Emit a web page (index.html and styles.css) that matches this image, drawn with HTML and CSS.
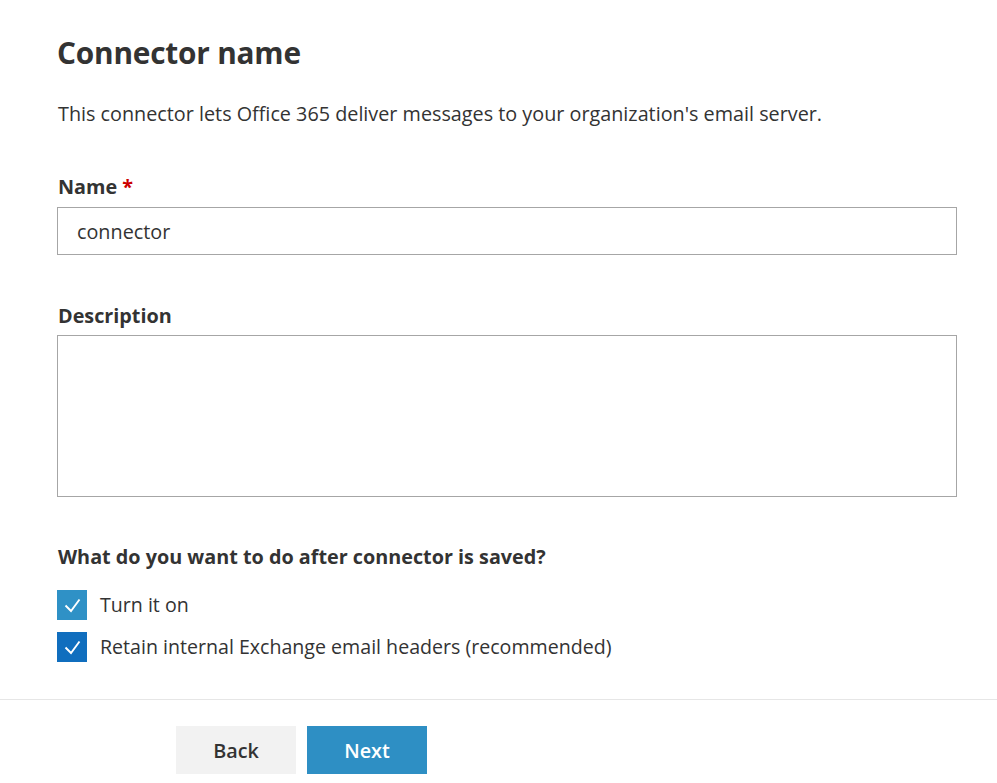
FILE: index.html
```html
<!DOCTYPE html>
<html lang="en">
<head>
<meta charset="utf-8">
<title>Connector name</title>
<link rel="stylesheet" href="styles.css">
</head>
<body>
<main class="page">
  <section class="content">
    <h1 class="title">Connector name</h1>
    <p class="intro">This connector lets Office 365 deliver messages to your organization's email server.</p>

    <div class="field field-name">
      <label class="label" for="name">Name <span class="req">*</span></label>
      <input class="input" id="name" type="text" value="connector">
    </div>

    <div class="field field-desc">
      <label class="label" for="desc">Description</label>
      <textarea class="textarea" id="desc"></textarea>
    </div>

    <div class="field field-after">
      <div class="label">What do you want to do after connector is saved?</div>
      <div class="checks">
        <label class="check">
          <span class="box box-light"><svg viewBox="0 0 30 30" width="30" height="30"><path d="M8.5 15.5 L14 21 L22.5 9.5" fill="none" stroke="#fff" stroke-width="1.9"/></svg></span>
          <span class="check-text">Turn it on</span>
        </label>
        <label class="check">
          <span class="box box-dark"><svg viewBox="0 0 30 30" width="30" height="30"><path d="M8.5 15.5 L14 21 L22.5 9.5" fill="none" stroke="#fff" stroke-width="1.9"/></svg></span>
          <span class="check-text">Retain internal Exchange email headers (recommended)</span>
        </label>
      </div>
    </div>
  </section>

  <footer class="footer">
    <button class="btn btn-back" type="button">Back</button>
    <button class="btn btn-next" type="button">Next</button>
  </footer>
</main>
</body>
</html>
```

FILE: styles.css
```css
* { box-sizing: border-box; }
html, body { margin: 0; padding: 0; background: #fff; }
body {
  font-family: "Open Sans", "Noto Sans", "Liberation Sans", sans-serif;
  color: #333;
  width: 997px;
  height: 783px;
  overflow: hidden;
}
.page { display: flex; flex-direction: column; }
.content { padding: 33px 40px 0 57px; }
.title {
  margin: 0;
  font-size: 29.8px;
  font-weight: 700;
  line-height: 40px;
  color: #333;
  letter-spacing: -0.2px;
}
.intro {
  margin: 27px 0 0 1px;
  font-size: 19.8px;
  line-height: 28px;
  color: #333;
}
.field { display: flex; flex-direction: column; }
.field-name { margin-top: 45px; }
.field-desc { margin-top: 47px; }
.field-after { margin-top: 46px; }
.label {
  font-size: 19.8px;
  font-weight: 700;
  line-height: 28px;
  color: #333;
  padding-left: 1px;
}
.req { color: #c00; }
.input {
  margin-top: 6px;
  width: 900px;
  height: 48px;
  border: 1px solid #a6a6a6;
  padding: 0 19px;
  font: inherit;
  font-size: 19.8px;
  color: #333;
  outline: none;
}
.textarea {
  margin-top: 5px;
  width: 900px;
  height: 162px;
  border: 1px solid #a6a6a6;
  resize: none;
  font: inherit;
  outline: none;
}
.checks { display: flex; flex-direction: column; gap: 12px; margin-top: 19px; }
.check { display: flex; align-items: center; gap: 13px; }
.box { width: 30px; height: 30px; display: block; flex: none; }
.box svg { display: block; }
.box-light { background: #2f91c6; }
.box-dark { background: #106ebe; }
.check-text { font-size: 19.6px; line-height: 28px; color: #333; }
.footer {
  margin-top: 37px;
  border-top: 1px solid #e6e6e6;
  padding: 26px 0 0 176px;
  display: flex;
  gap: 11px;
}
.btn {
  width: 120px;
  height: 48px;
  border: none;
  font-family: inherit;
  font-size: 19.8px;
  font-weight: 600;
  cursor: pointer;
}
.btn-back { background: #f2f2f2; color: #333; }
.btn-next { background: #2e8fc4; color: #fff; }
```
